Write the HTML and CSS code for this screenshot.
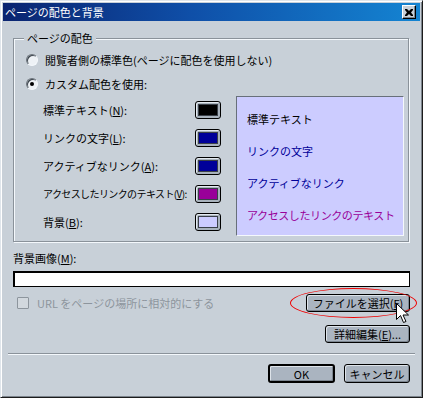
FILE: index.html
```html
<!DOCTYPE html>
<html lang="ja">
<head>
<meta charset="utf-8">
<title>ページの配色と背景</title>
<link rel="stylesheet" href="styles.css">
</head>
<body>
<div class="window">
  <div class="titlebar">
    <span class="title">ページの配色と背景</span>
    <span class="close"><svg width="8" height="7" viewBox="0 0 8 7"><path d="M0 0h2l2 2 2-2h2v1l-2 2.5 2 2.5v1h-2l-2-2-2 2h-2v-1l2-2.5-2-2.5z" fill="#000"/></svg></span>
  </div>
  <div class="content">
    <fieldset class="group">
      <legend>ページの配色</legend>
      <div class="radio-row"><span class="radio"></span><span>閲覧者側の標準色(ページに配色を使用しない)</span></div>
      <div class="radio-row"><span class="radio checked"></span><span>カスタム配色を使用:</span></div>
      <div class="colors">
        <div class="color-list">
          <div class="color-row"><span>標準テキスト(<u>N</u>):</span><span class="swatch-btn"><span class="swatch sw-text"></span></span></div>
          <div class="color-row"><span>リンクの文字(<u>L</u>):</span><span class="swatch-btn"><span class="swatch sw-link"></span></span></div>
          <div class="color-row"><span>アクティブなリンク(<u>A</u>):</span><span class="swatch-btn"><span class="swatch sw-link"></span></span></div>
          <div class="color-row"><span class="tight">アクセスしたリンクのテキスト(<u>V</u>):</span><span class="swatch-btn"><span class="swatch sw-visited"></span></span></div>
          <div class="color-row"><span>背景(<u>B</u>):</span><span class="swatch-btn"><span class="swatch sw-bg"></span></span></div>
        </div>
        <div class="preview">
          <div class="pv-row pv-text">標準テキスト</div>
          <div class="pv-row pv-link">リンクの文字</div>
          <div class="pv-row pv-link">アクティブなリンク</div>
          <div class="pv-row pv-visited">アクセスしたリンクのテキスト</div>
        </div>
      </div>
    </fieldset>
    <div class="bg-label">背景画像(<u>M</u>):</div>
    <div class="input"></div>
    <div class="row-file">
      <div class="check-row"><span class="checkbox"></span><span>URL をページの場所に相対的にする</span></div>
      <div class="file-wrap">
        <span class="btn btn-file">ファイルを選択(<u>F</u>)</span>
        <span class="ring"></span>
        <svg class="cursor" width="13" height="21" viewBox="0 0 13 21"><path d="M0.5 0.5v16l4-4 3 7 2.5-1-3-6.5h5.5z" fill="#fff" stroke="#000" stroke-width="1"/></svg>
      </div>
    </div>
    <div class="row-edit"><span class="btn btn-edit">詳細編集(<u>E</u>)...</span></div>
    <div class="sep"></div>
    <div class="actions">
      <span class="btn btn-ok">OK</span>
      <span class="btn btn-cancel">キャンセル</span>
    </div>
  </div>
</div>
</body>
</html>
```

FILE: styles.css
```css
* { box-sizing: border-box; }
html, body { margin: 0; padding: 0; }
body {
  width: 423px;
  height: 398px;
  background: #c8d0d8;
  font-family: "Noto Sans CJK JP", sans-serif;
  font-size: 11px;
  line-height: 14px;
  color: #000;
  overflow: hidden;
}
u { text-decoration: underline; text-underline-offset: 1px; }

.window {
  width: 423px;
  height: 398px;
  display: flex;
  flex-direction: column;
  background: #c8d0d8;
  border: 1px solid;
  border-color: #dfe5eb #1c1c1c #1c1c1c #dfe5eb;
  padding: 2px;
  box-shadow: inset 1px 1px #ffffff, inset -1px -1px #7c848c;
}

.titlebar {
  height: 18px;
  flex: none;
  display: flex;
  align-items: center;
  justify-content: space-between;
  padding: 0 4px 0 2px;
  background: linear-gradient(to right, #0a2470 0%, #0f4fa8 45%, #1484d2 100%);
}
.title { color: #fff; font-size: 11px; line-height: 14px; }
.close {
  width: 14px;
  height: 14px;
  display: flex;
  align-items: center;
  justify-content: center;
  background: #c8d0d8;
  border: 1px solid;
  border-color: #ffffff #000000 #000000 #ffffff;
  box-shadow: inset -1px -1px #7c848c;
}

.content {
  flex: 1;
  display: flex;
  flex-direction: column;
  padding: 10px 10px 0 10px;
}

.group {
  margin: 0 1px 0 0;
  padding: 3px 4px 5px 10px;
  min-width: 0;
  border: 1px solid #8a929a;
  box-shadow: inset 1px 1px #f4f8fc, 1px 1px #f4f8fc;
}
.group legend {
  padding: 0 3px;
  line-height: 14px;
  background: #c8d0d8;
}

.radio-row {
  height: 24px;
  display: flex;
  align-items: center;
  gap: 7px;
  padding-left: 2px;
}
.radio {
  width: 12px;
  height: 12px;
  flex: none;
  border-radius: 50%;
  border: 1px solid;
  border-color: #6a727a #f4f8fc #f4f8fc #6a727a;
  background: #eef2f6;
  box-shadow: inset 1px 1px #3c444c;
  display: flex;
  align-items: center;
  justify-content: center;
}
.radio.checked::after {
  content: "";
  width: 4px;
  height: 4px;
  border-radius: 50%;
  background: #000;
}

.colors { display: flex; }
.color-list {
  width: 197px;
  flex: none;
  padding-left: 19px;
}
.color-row {
  height: 28px;
  display: flex;
  align-items: center;
  justify-content: space-between;
  white-space: nowrap;
}
.tight { font-size: 10px; letter-spacing: -0.6px; }
.swatch-btn {
  width: 26px;
  height: 18px;
  flex: none;
  border: 1px solid #000;
  border-radius: 3px;
  background: #a8b2bc;
  box-shadow: inset 1px 1px #e4eaf0;
  padding: 2px;
  display: flex;
}
.swatch { flex: 1; border: 1px solid #3a4048; }
.sw-text { background: #000; }
.sw-link { background: #000099; }
.sw-visited { background: #990099; }
.sw-bg { background: #ccccff; }

.preview {
  flex: 1;
  margin-left: 15px;
  background: #ccccff;
  border: 1px solid;
  border-color: #68707a #f4f8fc #f4f8fc #68707a;
  padding: 6px 0 0 10px;
}
.pv-row { height: 32px; display: flex; align-items: center; white-space: nowrap; }
.pv-text { color: #000; }
.pv-link { color: #000099; }
.pv-visited { color: #990099; letter-spacing: -0.4px; }

.bg-label { margin-top: 9px; }
.input {
  margin-top: 6px;
  height: 16px;
  background: #fff;
  border: 1px solid #000;
  box-shadow: inset 1px 1px #000;
}

.row-file {
  margin-top: 7px;
  height: 18px;
  display: flex;
  align-items: center;
  justify-content: space-between;
}
.check-row {
  display: flex;
  align-items: center;
  gap: 8px;
  padding-left: 4px;
  color: #8d959d;
}
.checkbox {
  width: 12px;
  height: 12px;
  border: 1px solid #8d959d;
  border-radius: 1px;
  background: #d2d8de;
}
.file-wrap { position: relative; display: flex; }

.btn {
  height: 18px;
  display: flex;
  align-items: center;
  justify-content: center;
  border: 1px solid #000;
  border-radius: 3px;
  background: #aab4c0;
  box-shadow: inset 1px 1px #dde3e9, inset -1px -1px #7c8690;
  white-space: nowrap;
}
.btn-file { width: 104px; }
.ring {
  position: absolute;
  left: -16px;
  top: -6px;
  width: 127px;
  height: 30px;
  border: 1px solid #f00000;
  border-radius: 50%;
}
.cursor {
  position: absolute;
  left: 90px;
  top: 9px;
}

.row-edit {
  margin-top: 13px;
  display: flex;
  justify-content: flex-end;
}
.btn-edit { width: 85px; }

.sep {
  margin: 10px -5px 0;
  height: 2px;
  border-top: 1px solid #8a929a;
  border-bottom: 1px solid #f4f8fc;
}

.actions {
  margin-top: 9px;
  display: flex;
  justify-content: flex-end;
  align-items: center;
  gap: 9px;
}
.btn-ok { width: 67px; height: 19px; border-width: 2px; }
.btn-cancel { width: 66px; height: 19px; }
```
